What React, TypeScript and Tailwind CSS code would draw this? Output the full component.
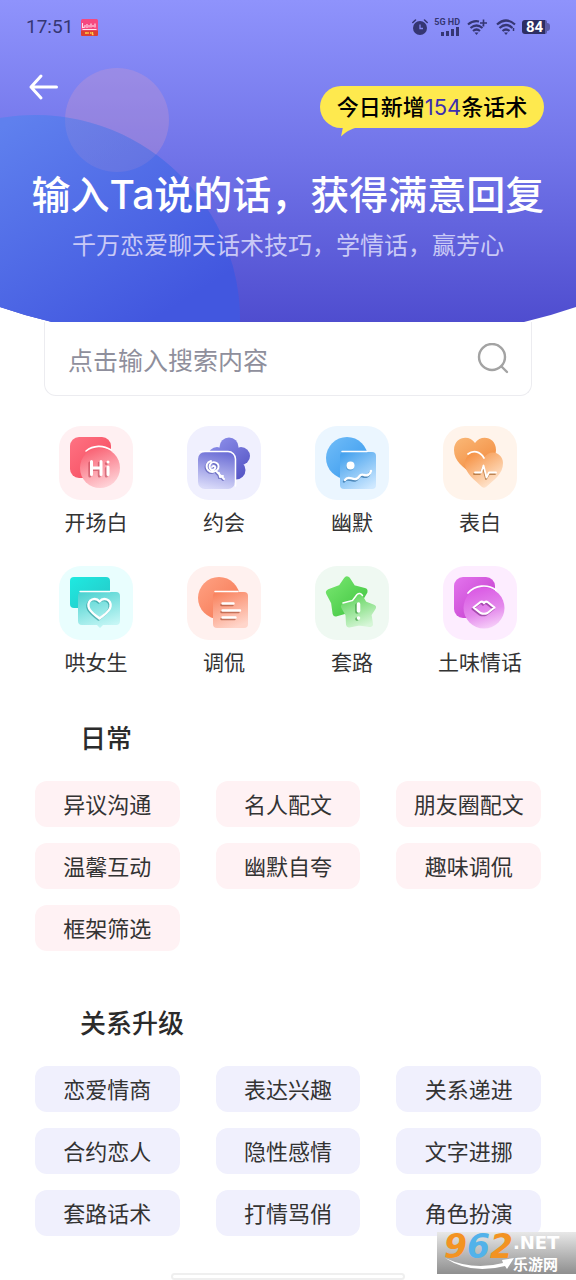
import type { ReactNode } from "react";

const tile = "flex h-[74px] w-[74px] items-center justify-center rounded-[22px]";

function OpeningIcon() {
  return (
    <svg viewBox="0 0 74 74" className="h-full w-full" aria-hidden="true">
      <defs>
        <linearGradient id="op1" x1="0" y1="0" x2="1" y2="1">
          <stop offset="0" stopColor="#ff7283" />
          <stop offset="1" stopColor="#f4495c" />
        </linearGradient>
        <linearGradient id="op2" x1="0.2" y1="0" x2="0.6" y2="1">
          <stop offset="0" stopColor="#f95d6f" />
          <stop offset="1" stopColor="#ffd3d8" />
        </linearGradient>
      </defs>
      <rect x="11" y="11" width="41" height="41" rx="9" fill="url(#op1)" />
      <circle cx="41" cy="42" r="20" fill="url(#op2)" />
      <path d="M27 25a21 21 0 0 1 25-1" fill="none" stroke="#fff" strokeWidth="1.6" strokeLinecap="round" />
      <g fill="none" strokeLinecap="round" strokeWidth="3">
        <path d="M32 36v13M41.500 36v13M32 42.500h9.500M48.500 41.500v7.500M48.500 36.500v.1" stroke="#b93a4c" opacity="0.55" transform="translate(-1.200 1)" />
        <path d="M32.500 35.500v13M42 35.500v13M32.500 42h9.500M49 41v7.500M49 36v.1" stroke="#fff" />
      </g>
    </svg>
  );
}

function DateIcon() {
  return (
    <svg viewBox="0 0 74 74" className="h-full w-full" aria-hidden="true">
      <defs>
        <linearGradient id="da1" gradientUnits="userSpaceOnUse" x1="24" y1="12" x2="58" y2="52">
          <stop offset="0" stopColor="#9092ec" />
          <stop offset="1" stopColor="#5454c4" />
        </linearGradient>
        <linearGradient id="da2" x1="0.6" y1="0" x2="0.4" y2="1">
          <stop offset="0" stopColor="#6d6fd6" />
          <stop offset="1" stopColor="#d9daf9" />
        </linearGradient>
      </defs>
      <g fill="url(#da1)">
        <circle cx="42" cy="21" r="9.500" />
        <circle cx="54" cy="30" r="9" />
        <circle cx="49" cy="44" r="9.500" />
        <circle cx="34" cy="43" r="9.500" />
        <circle cx="30" cy="30" r="9" />
        <circle cx="42" cy="33" r="12" />
      </g>
      <rect x="11" y="26" width="37" height="37" rx="7" fill="url(#da2)" />
      <path d="M13 25.500h28a7.500 7.500 0 0 1 7.500 7.500V60" fill="none" stroke="#fff" strokeWidth="1.500" strokeLinecap="round" />
      <g fill="none" strokeLinecap="round" strokeLinejoin="round" strokeWidth="1.900">
        <path d="M25 41c2-2.500 4.500.500 2.500 2-3 2.500-6-1-4.500-4.500 2-4 8.500-2.500 8.500 2s-6.500 7.500-10.500 3.500c-3-4-1-8 3-9M30 46l7 7M32 47l1 4 3-1" stroke="#4b4cab" opacity="0.6" transform="translate(-1 1)" />
        <path d="M25 41c2-2.500 4.500.500 2.500 2-3 2.500-6-1-4.500-4.500 2-4 8.500-2.500 8.500 2s-6.500 7.500-10.500 3.500c-3-4-1-8 3-9M30 46l7 7M32 47l1 4 3-1" stroke="#fff" />
      </g>
    </svg>
  );
}

function HumorIcon() {
  return (
    <svg viewBox="0 0 74 74" className="h-full w-full" aria-hidden="true">
      <defs>
        <linearGradient id="hu1" x1="0" y1="0" x2="1" y2="1">
          <stop offset="0" stopColor="#72bdf8" />
          <stop offset="1" stopColor="#3598ed" />
        </linearGradient>
        <linearGradient id="hu2" x1="0.2" y1="0" x2="0.8" y2="1">
          <stop offset="0" stopColor="#48a3ee" />
          <stop offset="1" stopColor="#cee8ff" />
        </linearGradient>
      </defs>
      <circle cx="32" cy="32" r="21" fill="url(#hu1)" />
      <rect x="25" y="26" width="36" height="37" rx="4" fill="url(#hu2)" />
      <path d="M27 25.500h25" stroke="#fff" strokeWidth="1.500" strokeLinecap="round" />
      <circle cx="35" cy="40.500" r="4" fill="#347db6" opacity="0.5" />
      <circle cx="35.500" cy="39.500" r="4" fill="#fff" />
      <g fill="none" strokeLinecap="round" strokeWidth="2.400">
        <path d="M30 54c3-5 7 0 11-1 4-1 3-6 8-4 3 1 6 0 7-4" stroke="#23649a" opacity="0.65" transform="translate(-1 1.500)" />
        <path d="M30 54c3-5 7 0 11-1 4-1 3-6 8-4 3 1 6 0 7-4" stroke="#fff" />
      </g>
    </svg>
  );
}

function ConfessIcon() {
  return (
    <svg viewBox="0 0 74 74" className="h-full w-full" aria-hidden="true">
      <defs>
        <linearGradient id="co1" x1="0" y1="0" x2="0.7" y2="1">
          <stop offset="0" stopColor="#fab877" />
          <stop offset="1" stopColor="#f28a3d" />
        </linearGradient>
        <linearGradient id="co2" x1="0.1" y1="0.1" x2="0.7" y2="1">
          <stop offset="0" stopColor="#f69549" />
          <stop offset="0.5" stopColor="#fbc08f" />
          <stop offset="1" stopColor="#ffe9d6" />
        </linearGradient>
      </defs>
      <path d="M32 17C26 8 11 11 11 24c0 11 9 17 19 25q2 1.500 4 0c10-8 19-14 19-25C53 11 38 8 32 17z" fill="url(#co1)" />
      <path d="M41 32C35 22 22 27 22 37c0 11 10 17 17 24q2 1.500 4 0c8-7 17-13 17-24 0-10-13-15-19-5z" fill="url(#co2)" />
      <path d="M25 28c5-4 12-3 16 4" fill="none" stroke="#fff" strokeWidth="1.700" strokeLinecap="round" />
      <g fill="none" strokeLinecap="round" strokeLinejoin="round" strokeWidth="1.800">
        <path d="M32 46.500h6l3-7 3 12 3-5h6" stroke="#9b5a22" opacity="0.65" transform="translate(-1 1.500)" />
        <path d="M32 46.500h6l2.500-7 3 12 2.500-5h7" stroke="#fff" />
      </g>
    </svg>
  );
}

function CoaxIcon() {
  return (
    <svg viewBox="0 0 74 74" className="h-full w-full" aria-hidden="true">
      <defs>
        <linearGradient id="ca1" x1="0" y1="0" x2="1" y2="1">
          <stop offset="0" stopColor="#1eeae1" />
          <stop offset="1" stopColor="#27c6c6" />
        </linearGradient>
        <linearGradient id="ca2" x1="0.2" y1="0" x2="0.6" y2="1">
          <stop offset="0" stopColor="#4ed3d1" />
          <stop offset="1" stopColor="#c5f6f5" />
        </linearGradient>
      </defs>
      <rect x="11" y="11" width="40" height="31" rx="4" fill="url(#ca1)" />
      <path d="M23 26h34a4 4 0 0 1 4 4v25a4 4 0 0 1-4 4H44l-3 3-3-3H23a4 4 0 0 1-4-4V30a4 4 0 0 1 4-4z" fill="url(#ca2)" />
      <path d="M21 25.500h30" stroke="#fff" strokeWidth="1.400" strokeLinecap="round" />
      <g fill="none" strokeLinejoin="round" strokeWidth="2.400">
        <path d="M40.500 35.500c-4-5-12-2-11 5 .5 5 6 8 11 12 5-4 10.500-7 11-12 1-7-7-10-11-5z" stroke="#238f91" opacity="0.6" transform="translate(-1 1)" />
        <path d="M40.500 35.500c-4-5-12-2-11 5 .5 5 6 8 11 12 5-4 10.500-7 11-12 1-7-7-10-11-5z" stroke="#fff" />
      </g>
    </svg>
  );
}

function TeaseIcon() {
  return (
    <svg viewBox="0 0 74 74" className="h-full w-full" aria-hidden="true">
      <defs>
        <linearGradient id="te1" x1="0" y1="0" x2="1" y2="1">
          <stop offset="0" stopColor="#ffa283" />
          <stop offset="1" stopColor="#f57551" />
        </linearGradient>
        <linearGradient id="te2" x1="0.2" y1="0" x2="0.6" y2="1">
          <stop offset="0" stopColor="#f98460" />
          <stop offset="1" stopColor="#ffd5ca" />
        </linearGradient>
      </defs>
      <circle cx="32" cy="32" r="21" fill="url(#te1)" />
      <rect x="26" y="26" width="35" height="36" rx="4" fill="url(#te2)" />
      <path d="M28 25.500h23" stroke="#fff" strokeWidth="1.500" strokeLinecap="round" />
      <g strokeLinecap="round" strokeWidth="2.400">
        <path d="M34.500 39h11M34.500 46h17M34.500 53h13" stroke="#a84d32" opacity="0.65" />
        <path d="M35.500 37.500h11M35.500 44.500h17.500M35.500 51.500h13" stroke="#fff" />
      </g>
    </svg>
  );
}

function RoutineIcon() {
  return (
    <svg viewBox="0 0 74 74" className="h-full w-full" aria-hidden="true">
      <defs>
        <linearGradient id="ro1" gradientUnits="userSpaceOnUse" x1="14" y1="12" x2="50" y2="50">
          <stop offset="0" stopColor="#77e66f" />
          <stop offset="1" stopColor="#3fc43f" />
        </linearGradient>
        <linearGradient id="ro2" gradientUnits="userSpaceOnUse" x1="36" y1="30" x2="48" y2="61">
          <stop offset="0" stopColor="#63d65f" />
          <stop offset="1" stopColor="#d7f6d8" />
        </linearGradient>
      </defs>
      <path d="M32 14L37.500 22.500 49 25.500 43 35.500 43 46 31.500 44 21 47 19.500 36 14.500 26.500 26.500 22z" fill="url(#ro1)" stroke="url(#ro1)" strokeWidth="7" strokeLinejoin="round" />
      <path d="M45 31L49 38 58 41.500 53.500 48.500 55 58 44 56.500 34 58.500 33.500 48.500 29 40.500 40 38z" fill="url(#ro2)" stroke="url(#ro2)" strokeWidth="6" strokeLinejoin="round" />
      <path d="M28 37l9.500-2.500 4.500-6q3-2.500 5.500 1" fill="none" stroke="#fff" strokeWidth="1.500" strokeLinecap="round" strokeLinejoin="round" />
      <g strokeLinecap="round" strokeWidth="3.600">
        <path d="M42 39v7M42 53v.1" stroke="#298b2d" opacity="0.6" />
        <path d="M43.500 38v7M43.500 52v.1" stroke="#fff" />
      </g>
    </svg>
  );
}

function CheesyIcon() {
  return (
    <svg viewBox="0 0 74 74" className="h-full w-full" aria-hidden="true">
      <defs>
        <linearGradient id="ch1" x1="0" y1="0" x2="1" y2="1">
          <stop offset="0" stopColor="#e374ed" />
          <stop offset="1" stopColor="#c13acb" />
        </linearGradient>
        <linearGradient id="ch2" x1="0.3" y1="0" x2="0.6" y2="1">
          <stop offset="0" stopColor="#da58e4" />
          <stop offset="0.6" stopColor="#e48aec" />
          <stop offset="1" stopColor="#f6cef9" />
        </linearGradient>
      </defs>
      <rect x="11" y="11" width="41" height="41" rx="9" fill="url(#ch1)" />
      <circle cx="41" cy="42" r="20.500" fill="url(#ch2)" />
      <path d="M25 27a21 21 0 0 1 28-3" fill="none" stroke="#fff" strokeWidth="1.700" strokeLinecap="round" />
      <g fill="none" strokeLinejoin="round" strokeWidth="2.200">
        <path d="M30.500 41.500l7-5.500q2-1 3.500 1 1.500-2 3.500-1l7 5.500-7 5.500q-3.500 1.500-7 0z" stroke="#7d2685" opacity="0.6" transform="translate(-1 1.500)" />
        <path d="M30.500 41.500l7-5.500q2-1 3.500 1 1.500-2 3.500-1l7 5.500-7 5.500q-3.500 1.500-7 0z" stroke="#fff" />
      </g>
    </svg>
  );
}

const categories: { name: string; bg: string; icon: ReactNode }[] = [
  { name: "开场白", bg: "bg-[#fff0f2]", icon: <OpeningIcon /> },
  { name: "约会", bg: "bg-[#f0f0fe]", icon: <DateIcon /> },
  { name: "幽默", bg: "bg-[#ebf6ff]", icon: <HumorIcon /> },
  { name: "表白", bg: "bg-[#fff4eb]", icon: <ConfessIcon /> },
  { name: "哄女生", bg: "bg-[#e9fefe]", icon: <CoaxIcon /> },
  { name: "调侃", bg: "bg-[#fff1ef]", icon: <TeaseIcon /> },
  { name: "套路", bg: "bg-[#eff9f2]", icon: <RoutineIcon /> },
  { name: "土味情话", bg: "bg-[#fdedff]", icon: <CheesyIcon /> },
];

const daily = ["异议沟通", "名人配文", "朋友圈配文", "温馨互动", "幽默自夸", "趣味调侃", "框架筛选"];
const upgrade = ["恋爱情商", "表达兴趣", "关系递进", "合约恋人", "隐性感情", "文字进挪", "套路话术", "打情骂俏", "角色扮演"];

function TagSection({ title, tags, color }: { title: string; tags: string[]; color: string }) {
  return (
    <section className="px-[35px]">
      <h2 className="pl-[45px] text-[26px] leading-8 font-medium text-[#2b2b2b]">{title}</h2>
      <div className="mt-7 grid grid-cols-3 gap-x-9 gap-y-4">
        {tags.map((t) => (
          <button key={t} type="button" className={"h-[46px] rounded-xl pb-[2px] text-[22px] leading-[44px] whitespace-nowrap " + color}>
            {t}
          </button>
        ))}
      </div>
    </section>
  );
}

function StatusBar() {
  return (
    <div className="flex h-[54px] items-center justify-between px-[26px] text-[#353673]">
      <div className="flex items-center gap-2">
        <span className="font-[Roboto,sans-serif] text-[19px] leading-6">17:51</span>
        <svg viewBox="0 0 17 17" className="h-[17px] w-[17px]" aria-hidden="true">
          <rect width="17" height="17" rx="1.500" fill="#f5487f" />
          <path d="M0 11.500h17V15.500a1.500 1.500 0 0 1-1.500 1.500h-14A1.500 1.500 0 0 1 0 15.500z" fill="#dd4031" />
          <path d="M1.500 4v4.500l2.500-.5v-2M6 9V5M8 8.500V6M10 4.500v4M12 8V6M14 8.500v-4M1.500 10.500h14" stroke="#ffe3ee" strokeWidth="1.100" fill="none" />
          <path d="M4 14h2M7 13v2M9 14h1.500M11.500 13v2.500h1" stroke="#ffd24a" strokeWidth="1.300" fill="none" />
        </svg>
      </div>
      <div className="flex items-center">
        <svg viewBox="0 0 16 16" className="h-4 w-4" aria-hidden="true">
          <circle cx="8" cy="9" r="7" fill="currentColor" />
          <path d="M.8 3.500L3.500 1M15.200 3.500L12.500 1" stroke="currentColor" strokeWidth="1.500" strokeLinecap="round" />
          <path d="M8 5.500V9.500h3" fill="none" stroke="#8589f4" strokeWidth="1.300" />
        </svg>
        <div className="ml-[6px] flex w-[26px] flex-col items-end">
          <span className="font-[Roboto,sans-serif] text-[9px] leading-[9px] font-bold whitespace-nowrap">5G HD</span>
          <svg viewBox="0 0 20 9" className="h-[9px] w-5" aria-hidden="true">
            <path d="M2.500 9v-4M7.500 9v-5M12.500 9V2M17.500 9V0" stroke="currentColor" strokeWidth="3" />
          </svg>
        </div>
        <svg viewBox="0 0 20 16" className="ml-[7px] h-4 w-5" aria-hidden="true">
          <g fill="none" stroke="currentColor" strokeWidth="2.200">
            <path d="M1 5.500Q6 1.200 12 2.500M16.500 5.800l-.5-.4M3.500 9q6-5 12 0M6 12q3.500-3 7 0" />
            <path d="M16.500 .5v7M13 4h7" strokeWidth="1.600" />
          </g>
          <path d="M7.500 13.500h4L9.500 16z" fill="currentColor" />
        </svg>
        <svg viewBox="0 0 20 16" className="ml-[9px] h-4 w-5" aria-hidden="true">
          <path d="M1 5.500q9-8 18 0M3.500 9q6.500-6 13 0M6.500 12q3.500-3 7 0" fill="none" stroke="currentColor" strokeWidth="2.200" />
          <path d="M8 13.500h4L10 16z" fill="currentColor" />
          <path d="M17.500 9v3" stroke="currentColor" strokeWidth="1.500" />
        </svg>
        <div className="ml-[6px] flex items-center">
          <span className="flex h-[14px] w-[23px] items-center justify-center rounded-l-[3px] bg-[#2d2e62] pl-[2px] font-[Roboto,sans-serif] text-[15px] leading-[14px] font-bold text-white">84</span>
          <span className="h-[14px] w-[2px] rounded-r-sm bg-[#5a5ca9]" />
          <span className="h-2 w-[3px] rounded-r-sm bg-[#5a5ca9]" />
        </div>
      </div>
    </div>
  );
}

function Header() {
  return (
    <header className="relative h-[322px] overflow-hidden">
      <svg viewBox="0 0 576 322" preserveAspectRatio="none" className="absolute inset-0 h-full w-full" aria-hidden="true">
        <defs>
          <linearGradient id="sky" x1="0" y1="0" x2="0" y2="1">
            <stop offset="0" stopColor="#8f93fc" />
            <stop offset="0.5" stopColor="#7073e8" />
            <stop offset="1" stopColor="#4f4dcf" />
          </linearGradient>
          <linearGradient id="sea" gradientUnits="userSpaceOnUse" x1="20" y1="115" x2="150" y2="322">
            <stop offset="0" stopColor="#5f80ee" />
            <stop offset="1" stopColor="#4257df" />
          </linearGradient>
          <clipPath id="bowl">
            <path d="M0 0H576V307Q550 316 524 322H52Q26 316 0 307z" />
          </clipPath>
        </defs>
        <g clipPath="url(#bowl)">
          <rect width="576" height="322" fill="url(#sky)" />
          <circle cx="35" cy="320" r="205" fill="url(#sea)" />
          <circle cx="117" cy="120" r="52" fill="#e5a0c0" opacity="0.25" />
          <path d="M0 118A205 205 0 0 1 240 322H0z" fill="url(#sea)" opacity="0.5" />
        </g>
      </svg>
      <div className="relative">
        <StatusBar />
        <div className="flex items-start justify-between pr-8 pl-7">
          <button type="button" aria-label="返回" className="mt-[18px] text-white">
            <svg viewBox="0 0 32 30" className="h-[30px] w-8" fill="none" stroke="currentColor" strokeWidth="3" strokeLinecap="round" strokeLinejoin="round" aria-hidden="true">
              <path d="M28.500 15H3M13 4L3 15l10 11" />
            </svg>
          </button>
          <div className="relative mt-8 flex h-[42px] w-[224px] items-center justify-center rounded-full bg-[#fee94e] font-[Inter,'Noto_Sans_CJK_SC',sans-serif] text-[22px] leading-[42px] whitespace-nowrap text-black">
            <span className="font-medium">今日新增</span>
            <span className="text-[#3d2fb0]">154</span>
            <span className="font-medium">条话术</span>
            <svg viewBox="0 0 18 10" className="absolute top-[41px] left-5 h-[10px] w-[18px]" aria-hidden="true">
              <path d="M3 0L1 9.500Q7 3 18 0z" fill="#fee94e" />
            </svg>
          </div>
        </div>
        <h1 className="mt-10 text-center font-[Inter,'Noto_Sans_CJK_SC',sans-serif] text-[39px] leading-[54px] font-medium whitespace-nowrap text-white">输入Ta说的话，获得满意回复</h1>
        <p className="mt-1 text-center text-2xl leading-9 whitespace-nowrap text-[#c9c9f6]">千万恋爱聊天话术技巧，学情话，赢芳心</p>
      </div>
    </header>
  );
}

export default function App() {
  return (
    <div className="relative min-h-screen overflow-hidden bg-white pb-10 font-['Noto_Sans_CJK_SC',sans-serif] text-[#333]">
      <Header />
      <main>
        <form className="mx-11 flex h-[74px] items-center rounded-b-xl border border-t-0 border-[#ececf0] bg-white pr-[22px] pl-[23px]">
          <input
            type="search"
            aria-label="搜索"
            placeholder="点击输入搜索内容"
            className="min-w-0 flex-1 text-[25px] leading-9 outline-none placeholder:text-[#8f8f9c]"
          />
          <button type="submit" aria-label="提交搜索">
            <svg viewBox="0 0 32 32" className="h-8 w-8" fill="none" stroke="#a3a3a3" strokeWidth="2.400" strokeLinecap="round" aria-hidden="true">
              <circle cx="15" cy="14" r="13" />
              <path d="M24.500 23.500L30 29" />
            </svg>
          </button>
        </form>
        <nav className="mt-[30px] grid grid-cols-4 gap-y-7 px-8">
          {categories.map((c) => (
            <a key={c.name} href="#" className="flex flex-col items-center">
              <span className={tile + " " + c.bg}>{c.icon}</span>
              <span className="mt-[5px] mb-px text-[21px] leading-8 whitespace-nowrap">{c.name}</span>
            </a>
          ))}
        </nav>
        <div className="mt-[43px] flex flex-col gap-[55px]">
          <TagSection title="日常" tags={daily} color="bg-[#fff2f4]" />
          <TagSection title="关系升级" tags={upgrade} color="bg-[#f0f0fd]" />
        </div>
      </main>
      <div className="absolute bottom-0 left-1/2 h-[7px] w-[234px] -translate-x-1/2 rounded-full border-2 border-[#efefef] bg-white" />
      <div className="absolute right-0 bottom-[6px] flex h-[42px] w-[139px] items-start bg-linear-to-b from-[#e8e8e8] to-[#8f8f8f] pl-[7px] font-['DejaVu_Sans','Noto_Sans_CJK_SC',sans-serif]">
        <svg viewBox="0 0 70 14" className="absolute bottom-[2px] left-2 h-[14px] w-[70px]" aria-hidden="true">
          <path d="M0 0Q28 13 58 5L57 2 69 0 62 11 60 8Q26 17 0 0z" fill="#fff" />
        </svg>
        <span className="relative text-[33px] leading-[30px] font-bold text-[#f39322] italic">9<span className="text-[#52b2ea]">6</span>2</span>
        <span className="relative flex flex-col font-bold text-white">
          <span className="text-lg leading-[22px]">.NET</span>
          <span className="font-['Noto_Sans_CJK_SC',sans-serif] text-[15px] leading-5">乐游网</span>
        </span>
      </div>
    </div>
  );
}
